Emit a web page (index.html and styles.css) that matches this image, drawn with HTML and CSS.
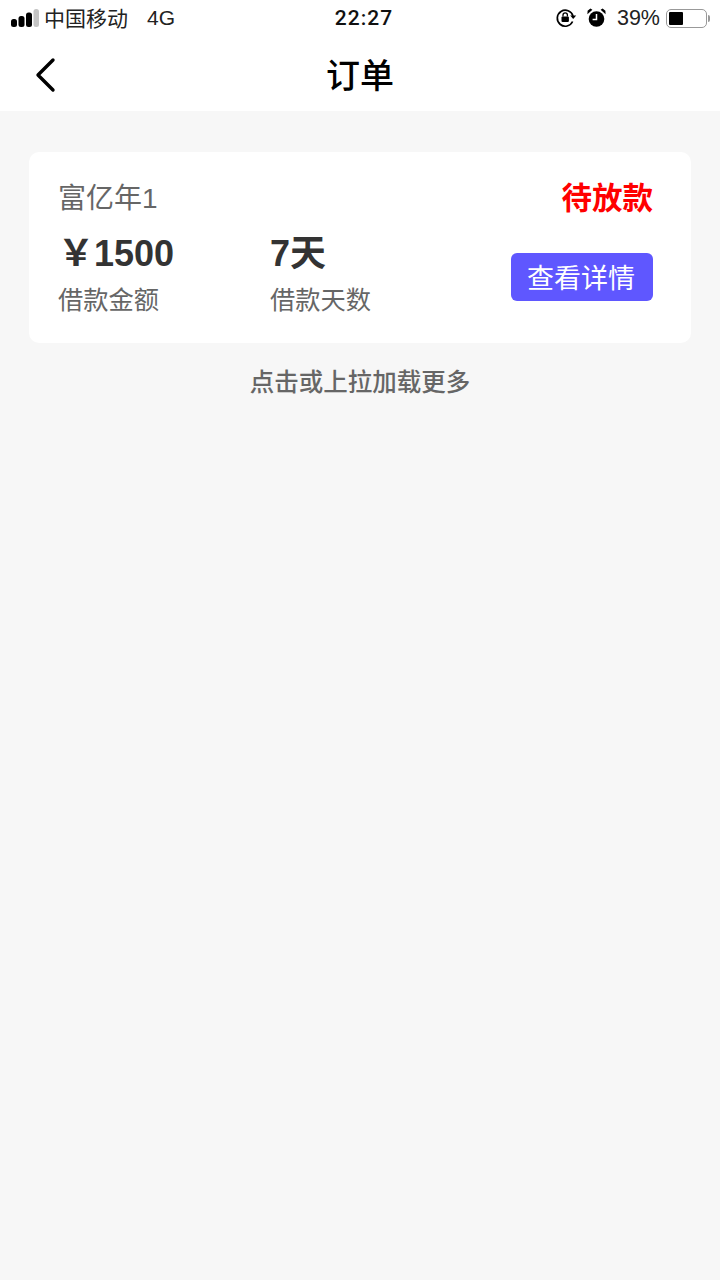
FILE: index.html
```html
<!DOCTYPE html>
<html lang="zh-CN">
<head>
  <meta charset="UTF-8" />
  <meta name="viewport" content="width=device-width, initial-scale=1.0" />
  <title>订单</title>
  <link rel="stylesheet" href="styles.css">
</head>
<body>
  <div class="status-bar">
    <div class="status-left">
      <svg class="signal" width="28" height="18" viewBox="0 0 28 18">
        <rect x="0" y="10" width="6" height="8" rx="2.5" fill="#000"/>
        <rect x="7.5" y="7" width="6" height="11" rx="2.5" fill="#000"/>
        <rect x="15" y="3.5" width="6" height="14.5" rx="2.5" fill="#000"/>
        <rect x="22.5" y="0" width="5.5" height="18" rx="2.5" fill="#c4c4c4"/>
      </svg>
      <span class="carrier">中国移动</span>
      <span class="network">4G</span>
    </div>
    <div class="status-time">22:27</div>
    <div class="status-right">
      <svg width="22" height="20" viewBox="0 0 22 20">
        <path d="M17.6 13.5A8 8 0 1 1 18 8" fill="none" stroke="#000" stroke-width="1.7"/>
        <path d="M15.2 7.5h6l-3 3.6z" fill="#000"/>
        <rect x="6.5" y="8.5" width="7.4" height="5.5" rx="1" fill="#000"/>
        <path d="M8 8.5V7a2.2 2.2 0 0 1 4.4 0v1.5" fill="none" stroke="#000" stroke-width="1.3"/>
      </svg>
      <svg class="alarm" width="19" height="20" viewBox="0 0 19 20">
        <circle cx="9.5" cy="11" r="7.8" fill="#000"/>
        <path d="M0.4 6.2L5.4 1.8 3.4 0.6 0.6 2.8zM18.6 6.2L13.6 1.8 15.6 0.6 18.4 2.8z" fill="#000"/>
        <path d="M9.5 6v5.4H5.6" fill="none" stroke="#fff" stroke-width="1.5"/>
      </svg>
      <span class="battery-text">39%</span>
      <div class="battery">
        <div class="battery-level"></div>
      </div>
      <div class="battery-tip"></div>
    </div>
  </div>

  <header class="nav-bar">
    <svg class="back" width="24" height="36" viewBox="0 0 24 36">
      <path d="M20 3L5 18l15 15" fill="none" stroke="#000" stroke-width="3.4" stroke-linecap="round" stroke-linejoin="round"/>
    </svg>
    <h1>订单</h1>
  </header>

  <main class="content">
    <div class="order-card">
      <div class="order-main">
        <div class="order-name">富亿年1</div>
        <div class="order-stats">
          <div class="stat">
            <div class="stat-value"><span class="yen">￥</span>1500</div>
            <div class="stat-label">借款金额</div>
          </div>
          <div class="stat">
            <div class="stat-value">7天</div>
            <div class="stat-label">借款天数</div>
          </div>
        </div>
      </div>
      <div class="order-side">
        <div class="order-status">待放款</div>
        <button class="detail-btn">查看详情</button>
      </div>
    </div>
    <div class="load-more">点击或上拉加载更多</div>
  </main>
</body>
</html>
```

FILE: styles.css
```css
* {
  box-sizing: border-box;
}

html,
body {
  height: 100%;
}

body {
  margin: 0;
  height: 1280px;
  overflow: hidden;
  background-color: #f7f7f7;
  font-family: "Liberation Sans", "Noto Sans CJK SC", sans-serif;
  color: #000;
}

.status-bar {
  display: grid;
  grid-template-columns: 1fr auto 1fr;
  align-items: center;
  height: 36px;
  padding: 0 10px 0 11px;
  background-color: #fff;
  font-size: 21px;
}

.status-left {
  display: flex;
  align-items: center;
}

.carrier {
  margin-left: 5px;
  margin-top: -2px;
  font-size: 21px;
  color: #222;
}

.network {
  margin-left: 19px;
  color: #222;
}

.status-time {
  margin-left: 7px;
  font-family: Roboto, "Liberation Sans", sans-serif;
  font-weight: 500;
  font-size: 21px;
  letter-spacing: 1px;
  color: #111;
}

.status-right {
  display: flex;
  align-items: center;
  justify-content: flex-end;
}

.alarm {
  margin-left: 10px;
}

.battery-text {
  margin-left: 11px;
  font-size: 21.5px;
  color: #222;
}

.battery {
  width: 41px;
  height: 19px;
  margin-left: 6px;
  padding: 2px;
  border: 1.5px solid #999;
  border-radius: 5px;
}

.battery-level {
  width: 14px;
  height: 100%;
  border-radius: 1px;
  background-color: #000;
}

.battery-tip {
  width: 2px;
  height: 7px;
  margin-left: 1px;
  border-radius: 0 2px 2px 0;
  background-color: #999;
}

.nav-bar {
  position: relative;
  display: flex;
  align-items: center;
  justify-content: center;
  height: 75px;
  background-color: #fff;
}

.nav-bar h1 {
  margin: 0;
  font-size: 34px;
  font-weight: 500;
  color: #000;
}

.back {
  position: absolute;
  left: 33px;
  top: 21px;
}

.content {
  padding: 41px 29px 0;
}

.order-card {
  display: flex;
  justify-content: space-between;
  height: 191px;
  padding: 27px 38px 0 29px;
  border-radius: 10px;
  background-color: #fff;
}

.order-name {
  font-size: 28px;
  line-height: 40px;
  color: #666;
}

.order-stats {
  display: flex;
  margin-top: 14px;
}

.stat {
  width: 212px;
}

.stat-value {
  height: 42px;
  font-size: 36px;
  line-height: 42px;
  font-weight: bold;
  color: #333;
}

.stat-label {
  margin-top: 8px;
  font-size: 25.25px;
  line-height: 34px;
  color: #666;
}

.order-side {
  display: flex;
  flex-direction: column;
  align-items: flex-end;
}

.order-status {
  margin-top: -1px;
  font-size: 30.5px;
  line-height: 40px;
  font-weight: bold;
  color: #f00;
}

.detail-btn {
  width: 142px;
  height: 48px;
  margin-top: 35px;
  padding: 0 2px 2px 0;
  border: none;
  border-radius: 6px;
  background-color: #5f57ff;
  color: #fff;
  font-family: inherit;
  font-size: 27px;
}

.load-more {
  margin-top: 22px;
  text-align: center;
  font-size: 24.5px;
  line-height: 36px;
  font-weight: 500;
  color: #666;
}
```
